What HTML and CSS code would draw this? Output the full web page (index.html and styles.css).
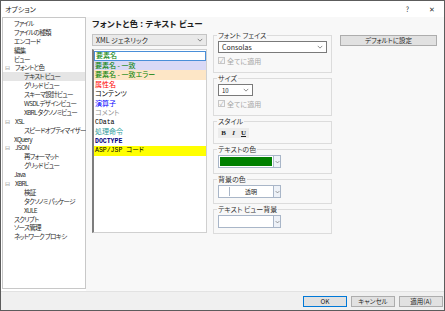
FILE: index.html
```html
<!DOCTYPE html>
<html lang="ja">

<head>
  <meta charset="UTF-8" />
  <title>オプション</title>
  <link rel="stylesheet" href="styles.css">
</head>

<body>
  <div class="window">
    <!-- Title bar -->
    <div class="titlebar">
      <span class="title">オプション</span>
      <span class="title-btn help">?</span>
      <span class="title-btn close">✕</span>
    </div>

    <div class="main">
      <!-- Category tree -->
      <ul class="tree">
        <li class="lvl0">ファイル</li>
        <li class="lvl0">ファイルの種類</li>
        <li class="lvl0">エンコード</li>
        <li class="lvl0">編集</li>
        <li class="lvl0">ビュー</li>
        <li class="node"><span class="exp">⊟</span>フォントと色</li>
        <li class="lvl1 selected">テキスト ビュー</li>
        <li class="lvl1">グリッド ビュー</li>
        <li class="lvl1">スキーマ設計ビュー</li>
        <li class="lvl1">WSDL デザインビュー</li>
        <li class="lvl1">XBRL タクソノミビュー</li>
        <li class="node"><span class="exp">⊟</span>XSL</li>
        <li class="lvl1">スピードオプティマイザー</li>
        <li class="lvl0">XQuery</li>
        <li class="node"><span class="exp">⊟</span>JSON</li>
        <li class="lvl1">再フォーマット</li>
        <li class="lvl1">グリッド ビュー</li>
        <li class="lvl0">Java</li>
        <li class="node"><span class="exp">⊟</span>XBRL</li>
        <li class="lvl1">検証</li>
        <li class="lvl1">タクソノミ パッケージ</li>
        <li class="lvl1">XULE</li>
        <li class="lvl0">スクリプト</li>
        <li class="lvl0">ソース管理</li>
        <li class="lvl0">ネットワーク プロキシ</li>
      </ul>

      <!-- Settings pane -->
      <div class="pane">
        <h1 class="heading">フォントと色 : テキスト ビュー</h1>
        <div class="columns">
          <div class="col-left">
            <div class="select gray">
              <span>XML ジェネリック</span>
              <svg class="chev" viewBox="0 0 8 5"><path d="M1 1l3 3 3-3" fill="none" stroke="#555" stroke-width="0.9"/></svg>
            </div>
            <ul class="listbox">
              <li class="item c-green focus">要素名</li>
              <li class="item c-green bg-lav">要素名 - 一致</li>
              <li class="item c-green bg-peach">要素名 - 一致エラー</li>
              <li class="item c-red">属性名</li>
              <li class="item">コンテンツ</li>
              <li class="item c-blue">演算子</li>
              <li class="item c-gray">コメント</li>
              <li class="item mono">CData</li>
              <li class="item c-teal">処理命令</li>
              <li class="item mono c-navy">DOCTYPE</li>
              <li class="item mono bg-yellow">ASP/JSP コード</li>
            </ul>
          </div>

          <div class="col-mid">
            <fieldset class="group g-font">
              <legend>フォント フェイス</legend>
              <div class="select wide">
                <span>Consolas</span>
                <svg class="chev" viewBox="0 0 8 5"><path d="M1 1l3 3 3-3" fill="none" stroke="#555" stroke-width="0.9"/></svg>
              </div>
              <label class="check"><span class="box">✓</span>全てに適用</label>
            </fieldset>

            <fieldset class="group g-font">
              <legend>サイズ</legend>
              <div class="select small">
                <span>10</span>
                <svg class="chev" viewBox="0 0 8 5"><path d="M1 1l3 3 3-3" fill="none" stroke="#555" stroke-width="0.9"/></svg>
              </div>
              <label class="check"><span class="box">✓</span>全てに適用</label>
            </fieldset>

            <fieldset class="group">
              <legend>スタイル</legend>
              <div class="styles">
                <span class="st b">B</span>
                <span class="st i">I</span>
                <span class="st u">U</span>
              </div>
            </fieldset>

            <fieldset class="group">
              <legend>テキストの色</legend>
              <div class="color">
                <span class="swatch green"></span>
                <span class="drop"><svg class="chev" viewBox="0 0 8 5"><path d="M1 1l3 3 3-3" fill="none" stroke="#555" stroke-width="0.9"/></svg></span>
              </div>
            </fieldset>

            <fieldset class="group">
              <legend>背景の色</legend>
              <div class="color">
                <span class="swatch clear"><span class="mini"></span><span class="clear-text">透明</span></span>
                <span class="drop"><svg class="chev" viewBox="0 0 8 5"><path d="M1 1l3 3 3-3" fill="none" stroke="#555" stroke-width="0.9"/></svg></span>
              </div>
            </fieldset>

            <fieldset class="group">
              <legend>テキスト ビュー背景</legend>
              <div class="color">
                <span class="swatch white"></span>
                <span class="drop"><svg class="chev" viewBox="0 0 8 5"><path d="M1 1l3 3 3-3" fill="none" stroke="#555" stroke-width="0.9"/></svg></span>
              </div>
            </fieldset>
          </div>

          <div class="col-right">
            <button class="btn default-btn">デフォルトに設定</button>
          </div>
        </div>
      </div>
    </div>

    <!-- Dialog buttons -->
    <div class="footer">
      <button class="btn ok">OK</button>
      <button class="btn">キャンセル</button>
      <button class="btn">適用(A)</button>
    </div>
  </div>
</body>

</html>
```

FILE: styles.css
```css
/* General */
body {
  margin: 0;
  width: 445px;
  height: 311px;
  overflow: hidden;
  font-family: "Noto Sans CJK JP", "Noto Sans", sans-serif;
  font-size: 7px;
  font-feature-settings: "palt";
  color: #1e1e1e;
  background: #fff;
}

ul {
  list-style: none;
  margin: 0;
  padding: 0;
}

/* Window frame */
.window {
  box-sizing: border-box;
  width: 445px;
  height: 311px;
  border: 1px solid #5c5c5c;
  display: flex;
  flex-direction: column;
  background: #fff;
}

.titlebar {
  height: 16px;
  display: flex;
  align-items: center;
  padding: 0 4px;
  background: #fff;
}

.title {
  flex: 1;
}

.title-btn {
  font-size: 7px;
  color: #333;
}

.help {
  margin-right: 20px;
}

.close {
  margin-right: 5px;
}

.main {
  flex: 1;
  display: flex;
  min-height: 0;
}

/* Tree */
.tree {
  box-sizing: border-box;
  width: 84px;
  margin: 0 0 2px 1px;
  padding-top: 1px;
  border: 1px solid #c8c8c8;
  background: #fff;
  font-size: 6.5px;
  letter-spacing: -0.7px;
  color: #2a2a2a;
}

.tree li {
  height: 8.9px;
  line-height: 8.9px;
  white-space: nowrap;
}

.tree .lvl0 {
  padding-left: 11px;
}

.tree .node {
  padding-left: 2px;
}

.tree .lvl1 {
  padding-left: 21px;
}

.tree .exp {
  display: inline-block;
  width: 10px;
  color: #999;
  font-size: 5.5px;
  letter-spacing: 0;
}

.tree .selected {
  background: #e5e5e5;
}

/* Settings pane */
.pane {
  flex: 1;
  background: #f8f8f8;
  padding: 1px 6px 0 6px;
}

.heading {
  margin: 0 0 3px 0;
  height: 10px;
  line-height: 10px;
  font-size: 8.5px;
  letter-spacing: 0.2px;
  font-weight: bold;
}

.columns {
  display: flex;
  align-items: flex-start;
}

.col-left {
  width: 115px;
  margin-top: 3px;
}

.col-mid {
  width: 119px;
  margin-left: 6px;
}

.col-right {
  width: 97px;
  margin-left: 8px;
  margin-top: 4px;
}

/* Combo boxes */
.select {
  box-sizing: border-box;
  height: 12px;
  display: flex;
  align-items: center;
  justify-content: space-between;
  padding: 0 3px;
  border: 1px solid #adadad;
  background: #fff;
}

.select.gray {
  background: #e9e9e9;
  border-color: #c4c4c4;
}

.select.wide {
  border-color: #7a7a7a;
}

.select.small {
  width: 35px;
  border-color: #7a7a7a;
  font-size: 6px;
}

.chev {
  width: 6px;
  height: 4px;
}

/* List box */
.listbox {
  box-sizing: border-box;
  height: 184px;
  margin-top: 3px;
  padding-top: 1px;
  border: 1px solid #d0d0d0;
  border-left: 2px solid #7d7d7d;
  background: #fff;
}

.item {
  box-sizing: border-box;
  height: 9.5px;
  line-height: 9.5px;
  padding-left: 1px;
  white-space: nowrap;
  overflow: hidden;
  color: #000;
}

.item.focus {
  border: 1px solid #4a8fd8;
  line-height: 7.5px;
}

.mono {
  font-family: "Liberation Mono", "Noto Sans CJK JP", monospace;
  font-size: 6.5px;
}

.c-green { color: #008000; }
.c-red { color: #ff0000; }
.c-blue { color: #0000ff; }
.c-gray { color: #909090; }
.c-teal { color: #2a9a9a; }
.c-navy { color: #000080; font-weight: bold; }
.bg-lav { background: #d9d9f6; }
.bg-peach { background: #fde6c6; }
.bg-yellow { background: #ffff00; }

/* Group boxes */
.group {
  margin: 0 0 1px 0;
  padding: 1px 4px 5px 4px;
  border: 1px solid #dcdcdc;
  min-width: 0;
}

.group.g-font {
  padding-bottom: 7px;
}

.group legend {
  padding: 0 1px;
  margin-left: -1px;
  height: 9px;
  line-height: 9px;
  color: #333;
}

.check {
  display: flex;
  align-items: center;
  gap: 2px;
  height: 9px;
  margin-top: 3px;
  color: #a6a6a6;
}

.check .box {
  box-sizing: border-box;
  width: 7px;
  height: 7px;
  border: 1px solid #c6c6c6;
  font-size: 6px;
  line-height: 5px;
  text-align: center;
  color: #a6a6a6;
}

.styles {
  display: inline-flex;
  background: #ececec;
  padding: 1px 2px;
  gap: 3px;
}

.st {
  width: 7px;
  height: 8px;
  line-height: 8px;
  text-align: center;
  font-family: "Liberation Serif", serif;
  font-weight: bold;
  font-size: 7px;
}

.st.i {
  font-style: italic;
}

.st.u {
  text-decoration: underline;
}

/* Colour pickers */
.color {
  display: flex;
  width: 63px;
  height: 13px;
}

.swatch {
  flex: 1;
  box-sizing: border-box;
  border: 1px solid #a9b6c8;
  border-right: none;
  background: #fff;
  padding: 1px;
}

.swatch.green {
  background: #008000;
  box-shadow: inset 0 0 0 1px #fff;
}

.swatch.clear {
  display: flex;
  align-items: center;
  padding: 1px;
}

.mini {
  box-sizing: border-box;
  width: 10px;
  height: 100%;
  border-right: 1px solid #a9b6c8;
}

.clear-text {
  flex: 1;
  text-align: center;
  font-size: 6px;
}

.drop {
  box-sizing: border-box;
  width: 8px;
  display: flex;
  align-items: center;
  justify-content: center;
  border: 1px solid #a9b6c8;
  background: #eef2f8;
}

.drop .chev {
  width: 5px;
}

/* Buttons */
.btn {
  box-sizing: border-box;
  font-family: inherit;
  font-size: 6.5px;
  font-feature-settings: "palt";
  color: #1e1e1e;
  background: #e1e1e1;
  border: 1px solid #adadad;
  padding: 0;
  height: 11px;
  line-height: 9px;
}

.default-btn {
  width: 97px;
}

.footer {
  height: 18px;
  display: flex;
  align-items: center;
  justify-content: flex-end;
  gap: 4px;
  padding-right: 1px;
  background: #f0f0f0;
  border-top: 1px solid #e2e2e2;
}

.footer .btn {
  width: 44px;
}

.footer .ok {
  border-color: #0078d7;
}
```
